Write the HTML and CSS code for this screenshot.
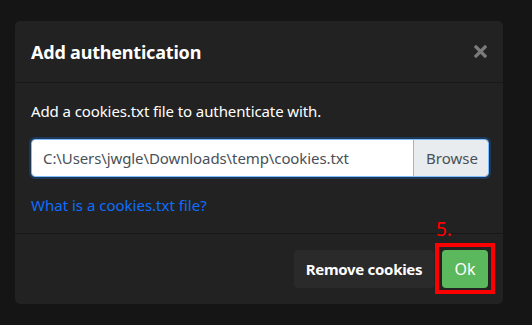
FILE: index.html
```html
<!DOCTYPE html>
<html lang="en">
<head>
    <meta charset="UTF-8">
    <meta name="viewport" content="width=device-width, initial-scale=1.0">
    <title>Add authentication</title>
    <link rel="stylesheet" href="styles.css">
</head>
<body>
    <div class="modal">
        <div class="modal-header">
            <h5 class="modal-title">Add authentication</h5>
            <button class="close" aria-label="Close">
                <svg width="13" height="13" viewBox="0 0 13 13">
                    <path d="M2 2 L11 11 M11 2 L2 11" stroke="#7a7a7a" stroke-width="3.2" stroke-linecap="square"/>
                </svg>
            </button>
        </div>

        <div class="modal-body">
            <p>Add a cookies.txt file to authenticate with.</p>
            <div class="input-group">
                <input type="text" class="path-input" value="C:\Users\jwgle\Downloads\temp\cookies.txt">
                <span class="browse">Browse</span>
            </div>
            <a href="#" class="help-link">What is a cookies.txt file?</a>
        </div>

        <div class="modal-footer">
            <button class="btn btn-dark">Remove cookies</button>
            <div class="marked">
                <span class="step">5.</span>
                <button class="btn btn-ok">Ok</button>
            </div>
        </div>
    </div>
</body>
</html>
```

FILE: styles.css
```css
:root {
    --page-bg: #151515;
    --modal-bg: #222222;
    --line: #181818;
    --text: #ffffff;
    --muted: #495057;
    --link: #0d6efd;
    --ok: #5cb85c;
    --mark: #ff0000;
}

body {
    margin: 0;
    padding: 21px 29px 20px 15px;
    background-color: var(--page-bg);
    color: var(--text);
    font-family: "Noto Sans", "Open Sans", sans-serif;
}

.modal {
    width: 488px;
    background-color: var(--modal-bg);
    border-radius: 5px;
}

.modal-header {
    display: flex;
    align-items: center;
    justify-content: space-between;
    height: 61px;
    padding: 0 16px 0 16px;
    border-bottom: 1px solid var(--line);
}

.modal-title {
    margin: 0;
    font-size: 18px;
    font-weight: 700;
    letter-spacing: -0.2px;
}

.close {
    display: flex;
    padding: 0;
    background: none;
    border: none;
    cursor: pointer;
}

.modal-body {
    padding: 16px 14px 16px 16px;
    border-bottom: 1px solid var(--line);
}

.modal-body p {
    margin: 0 0 16px;
    font-size: 15px;
    line-height: 24px;
    letter-spacing: -0.1px;
}

.input-group {
    display: flex;
    height: 38px;
    box-sizing: border-box;
    border: 1px solid #80bdff;
    border-radius: 4px;
    box-shadow: 0 0 0 2px #1c3856;
    overflow: hidden;
    margin-bottom: 16px;
}

.path-input {
    flex: 1;
    min-width: 0;
    padding: 0 11px;
    border: none;
    border-right: 1px solid #80bdff;
    outline: none;
    font-family: inherit;
    font-size: 15px;
    letter-spacing: -0.1px;
    color: var(--muted);
    background-color: #ffffff;
}

.browse {
    display: flex;
    align-items: center;
    padding: 0 6px 0 12px;
    width: 56px;
    font-size: 15px;
    color: var(--muted);
    background-color: #e9ecef;
}

.help-link {
    display: block;
    font-size: 15px;
    line-height: 24px;
    color: var(--link);
    text-decoration: none;
}

.modal-footer {
    display: flex;
    justify-content: flex-end;
    align-items: center;
    gap: 8px;
    padding: 16px 15px 16px 16px;
}

.btn {
    height: 38px;
    padding: 0;
    border: none;
    border-radius: 4px;
    font-family: inherit;
    font-size: 15px;
    color: var(--text);
    white-space: nowrap;
    cursor: pointer;
}

.btn-dark {
    width: 140px;
    font-weight: 700;
    letter-spacing: -0.3px;
    background-color: #2a2a2a;
}

.btn-ok {
    width: 46px;
    font-size: 16px;
    background-color: var(--ok);
}

.marked {
    position: relative;
    display: flex;
}

/* annotation drawn over the Ok button */
.marked::before {
    content: "";
    position: absolute;
    left: -7px;
    top: -7px;
    right: -7px;
    bottom: -6px;
    border: 4px solid var(--mark);
}

.step {
    position: absolute;
    left: -6px;
    top: -34px;
    font-size: 19px;
    color: var(--mark);
}
```
